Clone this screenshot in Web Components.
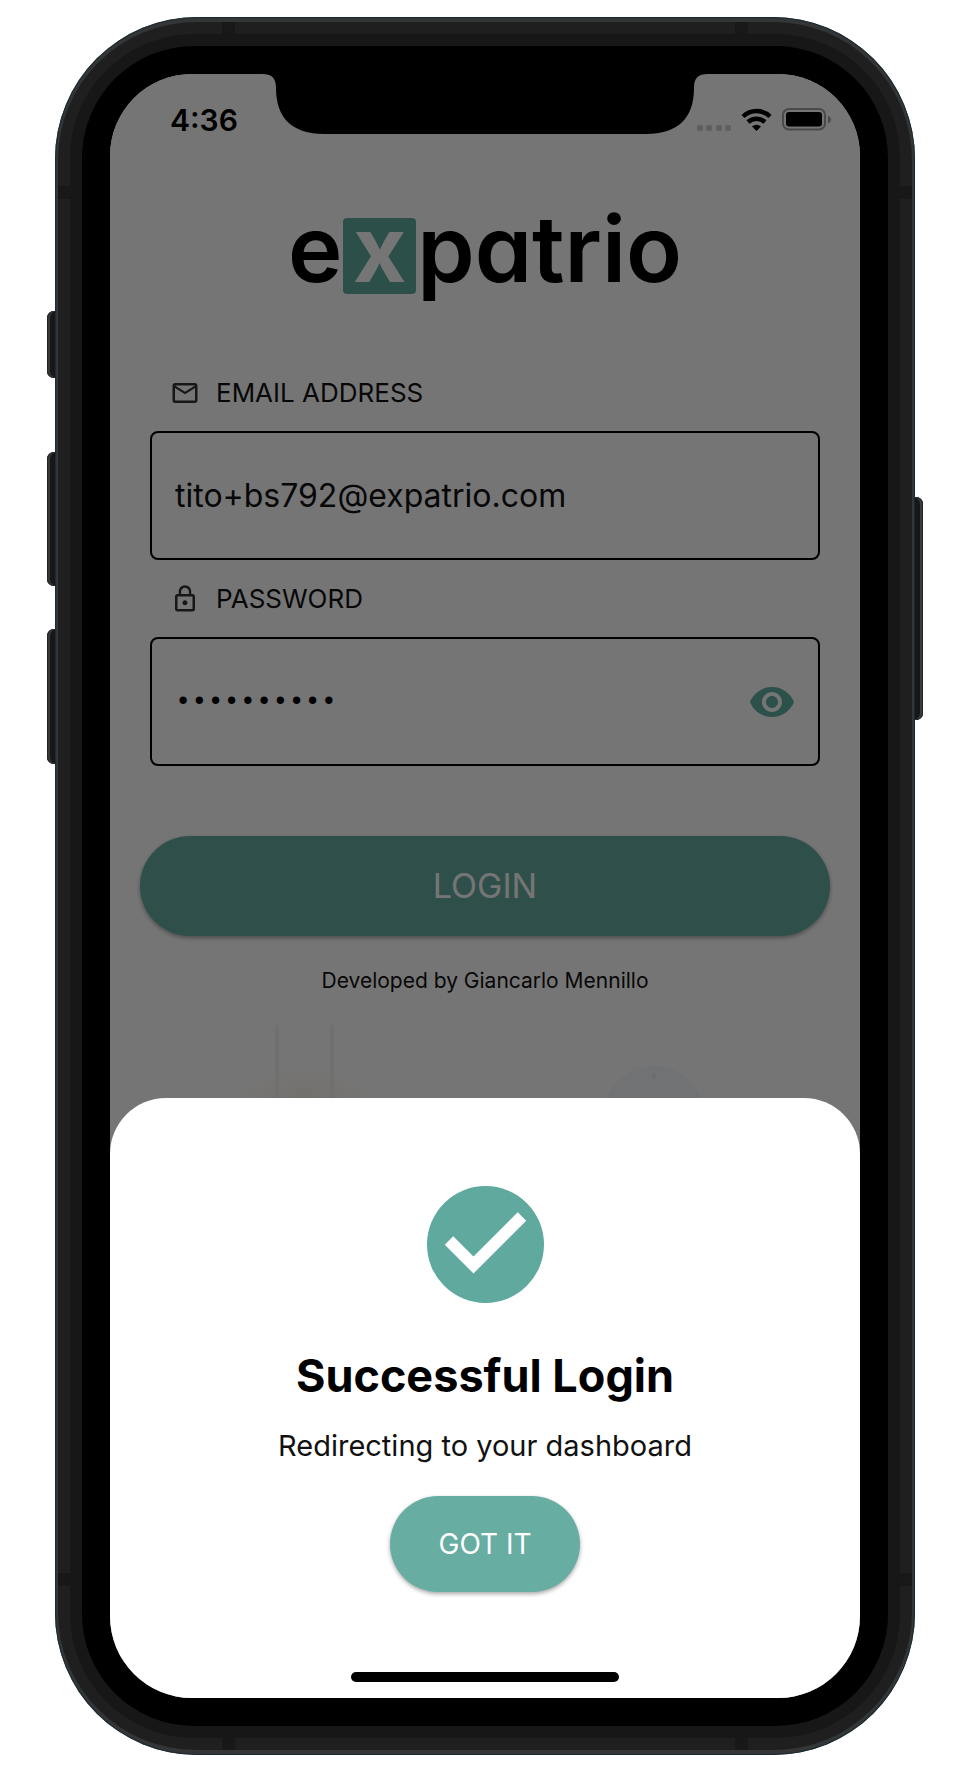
<!DOCTYPE html>
<html lang="en">
<head>
<meta charset="utf-8">
<meta name="viewport" content="width=device-width, initial-scale=1">
<title>Expatrio login</title>
<style>
  body { margin: 0; background: #fff; font-family: Inter, "Liberation Sans", sans-serif; color: #000; }
</style>
</head>
<body>
<phone-frame>
  <status-bar slot="status" time="4:36"></status-bar>
  <login-page></login-page>
  <bottom-sheet slot="overlay" heading="Successful Login" action="GOT IT">Redirecting to your dashboard</bottom-sheet>
</phone-frame>

<script>
const define = (name, html, setup) => customElements.define(name, class extends HTMLElement {
  connectedCallback() {
    if (this.shadowRoot) return;
    const t = document.createElement('template');
    t.innerHTML = html;
    this.attachShadow({ mode: 'open' }).append(t.content.cloneNode(true));
    if (setup) setup(this, this.shadowRoot);
  }
});

/* Device body: metal rim, bezel, side keys, antenna bands, notch */
define('phone-frame', `
<style>
  :host { display: block; padding: 17px 49px 29px 55px; }
  .rim { position: relative; background: #333536; padding: 5px 3px; border-radius: 142px; box-shadow: inset 0 0 0 1px #1a2c33; }
  .metal { position: relative; background: #1f1f1f; padding: 12px; border-radius: 138px; }
  .edge { background: #171717; padding: 12px; border-radius: 124px; }
  .bezel { background: #000; padding: 28px; border-radius: 112px; }
  .screen { position: relative; background: #fff; border-radius: 82px; overflow: hidden; display: flex; flex-direction: column; min-height: 1624px; }
  ::slotted([slot=status]) { z-index: 2; }
  .notch { position: absolute; z-index: 2; top: 0; left: 50%; margin-left: -223px; width: 446px; height: 60px; }
  .key { position: absolute; width: 8px; left: -8px; background: #171717; border-radius: 7px 0 0 7px; box-shadow: inset 1px 0 #1f2424, inset 3px 0 #363838; }
  .k1 { top: 294px; height: 67px; } .k2 { top: 435px; height: 134px; } .k3 { top: 612px; height: 135px; }
  .power { left: auto; right: -8px; top: 480px; height: 223px; border-radius: 0 7px 7px 0; box-shadow: inset -1px 0 #1f2424, inset -3px 0 #3c3c3c; }
  .band { position: absolute; background: #181818; width: 13px; height: 12px; }
  .t { top: 0; } .b { bottom: 0; } .x1 { left: 164px; } .x2 { right: 164px; }
  .side { width: 12px; height: 13px; } .l { left: 0; } .r { right: 0; } .y1 { top: 164px; } .y2 { bottom: 164px; }
</style>
<div class="rim">
  <i class="key k1"></i><i class="key k2"></i><i class="key k3"></i><i class="key power"></i>
  <div class="metal">
    <i class="band t x1"></i><i class="band t x2"></i><i class="band b x1"></i><i class="band b x2"></i>
    <i class="band side l y1"></i><i class="band side l y2"></i><i class="band side r y1"></i><i class="band side r y2"></i>
    <div class="edge"><div class="bezel"><div class="screen">
      <slot name="status"></slot>
      <slot></slot>
      <slot name="overlay"></slot>
      <svg class="notch" viewBox="0 0 446 60" aria-hidden="true"><path d="M0 0C10 0 14 4 14 14C14 44 30 60 62 60H384C416 60 432 44 432 14C432 4 436 0 446 0Z"/></svg>
    </div></div></div>
  </div>
</div>`);

define('status-bar', `
<style>
  :host { display: flex; justify-content: space-between; align-items: center; height: 36px; padding: 28px 28px 0 60px; }
  time { font-size: 30px; line-height: 36px; font-weight: 600; }
  svg { display: block; }
</style>
<time></time>
<svg width="135" height="24" viewBox="0 0 135 24" role="img" aria-label="Wi-Fi connected, battery full">
  <g fill="#5f5f5f"><rect x="0" y="17" width="6" height="6" rx="2"/><rect x="9" y="17" width="6" height="6" rx="2"/><rect x="19" y="17" width="6" height="6" rx="2"/><rect x="28" y="17" width="6" height="6" rx="2"/></g>
  <g fill="none" stroke="#000" stroke-width="4.500"><path d="M46 8.500A19.500 19.500 0 0 1 73 8.500"/><path d="M51 14A12.500 12.500 0 0 1 68 14"/></g>
  <path d="M55 18.500A6.500 6.500 0 0 1 64 18.500L59.500 23Z"/>
  <rect x="86" y="1" width="42" height="20.500" rx="6" fill="none" stroke="#4a4a4a" stroke-width="2"/>
  <rect x="89" y="4" width="36" height="14.500" rx="3"/>
  <path d="M131 7.500Q134 9 134 11.500Q134 14 131 15.500Z" fill="#4a4a4a"/>
</svg>`, (el, root) => { root.querySelector('time').textContent = el.getAttribute('time'); });

define('brand-logo', `
<style>
  :host { display: flex; justify-content: center; align-items: flex-start; gap: 1px; height: 76px; font-size: 92px; line-height: 92px; font-weight: 600; font-feature-settings: "cv11"; }
  span { margin-top: -15px; }
  .tile { margin: 0; width: 73px; height: 76px; line-height: 62px; text-align: center; border-radius: 4px; background: #61aea0; color: #fff; font-weight: 700; }
</style>
<span>e</span><span class="tile">x</span><span>patrio</span>`);

/* Text field with an icon label; the "toggle" attribute adds the reveal button */
define('form-field', `
<style>
  :host { display: block; }
  label { display: flex; align-items: center; gap: 16px; padding: 0 20px; margin-bottom: 22px; font-size: 26px; line-height: 32px; color: #111; }
  label svg { width: 30px; height: 30px; fill: #333; }
  .box { display: flex; align-items: center; box-sizing: border-box; height: 129px; border: 2px solid #000; border-radius: 8px; padding: 0 22px 0 23px; }
  input { flex: 1; min-width: 0; border: 0; outline: 0; padding: 0; background: none; color: #111; font: 32px/40px Inter, "Liberation Sans", sans-serif; }
  input[type=password] { font: 27px/40px "Liberation Mono", monospace; color: #000; }
  button { border: 0; padding: 0; background: none; width: 48px; height: 48px; }
  button svg { display: block; width: 48px; height: 48px; fill: #60aea1; }
</style>
<label for="f"><svg viewBox="0 0 24 24" aria-hidden="true"><path/></svg><span></span></label>
<div class="box"><input id="f"></div>`, (el, root) => {
  const icons = {
    mail: 'M22 6c0-1.100-.9-2-2-2H4c-1.100 0-2 .9-2 2v12c0 1.100.9 2 2 2h16c1.100 0 2-.9 2-2V6zm-2 0l-8 5-8-5h16zm0 12H4V8l8 5 8-5v10z',
    lock: 'M12 17c1.100 0 2-.9 2-2s-.9-2-2-2-2 .9-2 2 .9 2 2 2zm6-9h-1V6c0-2.760-2.240-5-5-5S7 3.240 7 6v2H6c-1.100 0-2 .9-2 2v10c0 1.100.9 2 2 2h12c1.100 0 2-.9 2-2V10c0-1.100-.9-2-2-2zM8.900 6c0-1.710 1.390-3.100 3.100-3.100s3.100 1.390 3.100 3.100v2H8.900V6zM18 20H6V10h12v10z'
  };
  root.querySelector('path').setAttribute('d', icons[el.getAttribute('icon')]);
  root.querySelector('label span').textContent = el.getAttribute('label');
  const input = root.querySelector('input');
  input.type = el.getAttribute('type');
  input.value = el.getAttribute('value');
  if (el.hasAttribute('toggle')) {
    const b = document.createElement('button');
    b.type = 'button';
    b.setAttribute('aria-label', 'Show password');
    b.innerHTML = '<svg viewBox="0 0 24 24"><path d="M12 4.500C7 4.500 2.730 7.610 1 12c1.730 4.390 6 7.500 11 7.500s9.270-3.110 11-7.500c-1.730-4.390-6-7.500-11-7.500zM12 17c-2.760 0-5-2.240-5-5s2.240-5 5-5 5 2.240 5 5-2.240 5-5 5zm0-8c-1.660 0-3 1.340-3 3s1.340 3 3 3 3-1.340 3-3-1.340-3-3-3z"/></svg>';
    b.onclick = () => { input.type = input.type === 'password' ? 'text' : 'password'; };
    root.querySelector('.box').append(b);
  }
});

define('pill-button', `
<style>
  :host { display: block; }
  button { display: block; width: 100%; height: var(--pill-height, 96px); border: 0; border-radius: 50px; padding: 0 48px; background: #67ada2; color: #fff; font: var(--pill-size, 28px)/40px Inter, "Liberation Sans", sans-serif; box-shadow: 0 2px 4px rgba(0,0,0,.35); }
</style>
<button type="button"><slot></slot></button>`);

define('login-art', `
<style>:host { display: block; } svg { display: block; width: 100%; height: 120px; }</style>
<svg viewBox="0 0 750 120" aria-hidden="true">
  <defs><radialGradient id="g"><stop offset="0" stop-color="#f8eedd"/><stop offset="1" stop-color="#f8eedd" stop-opacity="0"/></radialGradient></defs>
  <ellipse cx="195" cy="105" rx="80" ry="66" fill="url(#g)"/>
  <path d="M167 0V120M222 0V120" stroke="#f2f2f5" stroke-width="3"/>
  <circle cx="544" cy="92" r="51" fill="#f7f9fd"/>
  <ellipse cx="544" cy="51" rx="2" ry="3" fill="#e9edf3"/>
</svg>`);

define('login-page', `
<style>
  :host { display: flex; flex-direction: column; flex: 1; padding-top: 80px; }
  form { display: flex; flex-direction: column; gap: 23px; margin: 83px 40px 0; }
  pill-button { --pill-height: 100px; --pill-size: 34px; margin: 70px 30px 33px; }
  p { margin: 0 0 32px; font-size: 21px; line-height: 24px; text-align: center; color: #111; }
</style>
<brand-logo role="img" aria-label="expatrio"></brand-logo>
<form>
  <form-field icon="mail" label="EMAIL ADDRESS" type="email" value="tito+bs792@expatrio.com"></form-field>
  <form-field icon="lock" label="PASSWORD" type="password" value="0123456789" toggle></form-field>
</form>
<pill-button>LOGIN</pill-button>
<p>Developed by Giancarlo Mennillo</p>
<login-art></login-art>`);

/* Modal sheet with its scrim */
define('bottom-sheet', `
<style>
  :host { position: absolute; inset: 0; z-index: 1; display: flex; align-items: flex-end; background: rgba(0,0,0,.54); }
  section { flex: 1; display: flex; flex-direction: column; align-items: center; background: #fff; border-radius: 56px 56px 0 0; padding: 88px 24px 16px; text-align: center; }
  .check { display: block; width: 117px; height: 117px; }
  h1 { margin: 47px 0 28px; font-size: 45px; line-height: 52px; font-weight: 700; }
  p { margin: 0 0 34px; font-size: 29px; line-height: 32px; color: #111; }
  .home { width: 268px; height: 10px; border-radius: 5px; background: #000; margin-top: 80px; }
</style>
<section role="dialog" aria-modal="true" aria-labelledby="h">
  <svg class="check" viewBox="0 0 117 117" aria-hidden="true"><circle cx="58.500" cy="58.500" r="58.500" fill="#60a99e"/><path d="M22 54.500L46.500 79L95 30.500" fill="none" stroke="#fff" stroke-width="12"/></svg>
  <h1 id="h"></h1>
  <p><slot></slot></p>
  <pill-button></pill-button>
  <div class="home"></div>
</section>`, (el, root) => {
  root.querySelector('h1').textContent = el.getAttribute('heading');
  root.querySelector('pill-button').textContent = el.getAttribute('action');
});
</script>
</body>
</html>
